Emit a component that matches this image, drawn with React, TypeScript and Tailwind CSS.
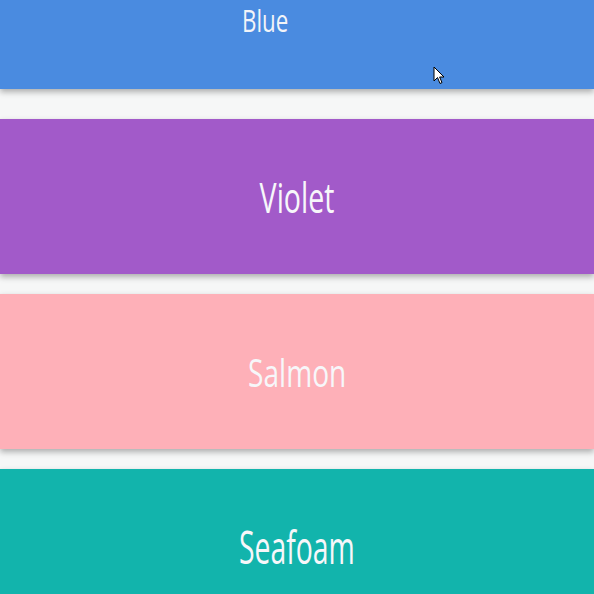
import React from 'react';

const bands = [
  { name: 'Violet', bg: 'bg-[#a25ac9]', text: 'text-[42px] scale-x-[0.68]', z: 'z-20 mt-[10px]' },
  { name: 'Salmon', bg: 'bg-[#feb0b8]', text: 'text-[39px] scale-x-[0.72]', z: 'z-10' },
  { name: 'Seafoam', bg: 'bg-[#12b4ac]', text: 'text-[45px] scale-x-[0.63]', z: 'z-0' },
];

export default function App() {
  return (
    <div className="relative h-[594px] w-[594px] overflow-hidden bg-[#f6f7f7] font-['Open_Sans',sans-serif]">
      <div className="flex flex-col gap-[20px]">
        <div className="relative z-30 flex h-[89px] justify-center bg-[#4a8be0] pt-[5px] shadow-[0_3px_6px_rgba(0,0,0,0.3)]">
          <span className="inline-block -translate-x-[32px] scale-x-[0.72] text-[31px] leading-none text-[#f2f4f8]">Blue</span>
        </div>
        {bands.map((b) => (
          <div
            key={b.name}
            className={`relative flex h-[155px] shrink-0 items-center justify-center ${b.bg} ${b.z} shadow-[0_3px_6px_rgba(0,0,0,0.3)]`}
          >
            <span className={`inline-block ${b.text} leading-none text-[#f7f7fa]`}>{b.name}</span>
          </div>
        ))}
      </div>
      <svg className="absolute left-[433px] top-[66px] z-40" width="12" height="19" viewBox="0 0 12 19">
        <path d="M1 1 L1 15 L4.5 11.5 L7 17.5 L9 16.6 L6.6 11 L11 11 Z" fill="#fff" stroke="#000" strokeWidth="1" strokeLinejoin="round" />
      </svg>
    </div>
  );
}
